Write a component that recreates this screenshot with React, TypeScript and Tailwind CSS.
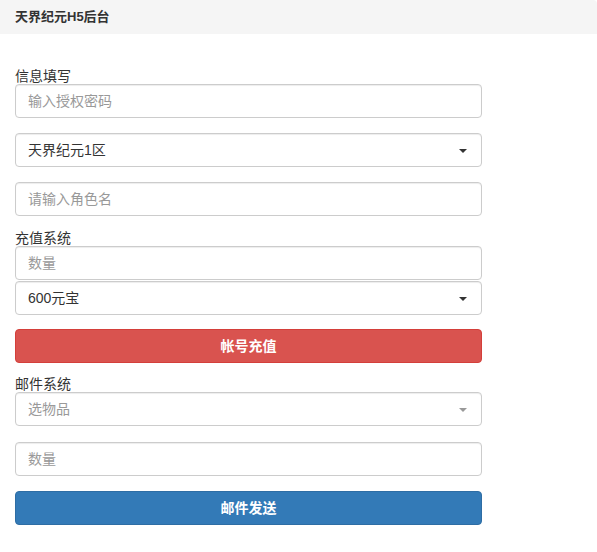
import React from "react";

const font = { fontFamily: '"Liberation Sans", "Noto Sans CJK SC", sans-serif' };

function Caret({ muted = false }: { muted?: boolean }) {
  return (
    <svg width="8" height="4" viewBox="0 0 8 4" className="absolute right-[14px] top-[15px]">
      <path d="M0 0h8L4 4z" fill={muted ? "#999" : "#333"} />
    </svg>
  );
}

function Field({ placeholder, className = "" }: { placeholder: string; className?: string }) {
  return (
    <div
      className={`flex h-[34px] items-center rounded-[4px] border border-[#ccc] bg-white px-3 text-[14px] text-[#999] shadow-[inset_0_1px_1px_rgba(0,0,0,0.075)] ${className}`}
    >
      {placeholder}
    </div>
  );
}

function Select({ value, muted = false, className = "" }: { value: string; muted?: boolean; className?: string }) {
  return (
    <div
      className={`relative flex h-[34px] items-center rounded-[4px] border border-[#ccc] bg-white px-3 text-[14px] shadow-[inset_0_1px_1px_rgba(0,0,0,0.075)] ${
        muted ? "text-[#999]" : "text-[#333]"
      } ${className}`}
    >
      {value}
      <Caret muted={muted} />
    </div>
  );
}

function Label({ children, className = "" }: { children: React.ReactNode; className?: string }) {
  return <div className={`h-4 text-[14px] leading-4 text-[#333] ${className}`}>{children}</div>;
}

export default function App() {
  return (
    <div className="min-h-[552px] w-[597px] bg-white" style={font}>
      <div className="flex h-[34px] items-center rounded-tr-[4px] bg-[#f5f5f5] px-[15px] text-[13px] font-bold text-[#333]">
        天界纪元H5后台
      </div>
      <div className="flex w-[482px] flex-col pl-[15px] pt-[34px]">
        <Label>信息填写</Label>
        <Field placeholder="输入授权密码" />
        <Select value="天界纪元1区" className="mt-[15px]" />
        <Field placeholder="请输入角色名" className="mt-[15px]" />

        <Label className="mt-[14px]">充值系统</Label>
        <Field placeholder="数量" />
        <Select value="600元宝" className="mt-px" />
        <button className="mt-[14px] flex h-[34px] items-center justify-center rounded-[4px] border border-[#d43f3a] bg-[#d9534f] text-[14px] font-bold text-white">
          帐号充值
        </button>

        <Label className="mt-[13px]">邮件系统</Label>
        <Select value="选物品" muted />
        <Field placeholder="数量" className="mt-4" />
        <button className="mt-[15px] flex h-[34px] items-center justify-center rounded-[4px] border border-[#2e6da4] bg-[#337ab7] text-[14px] font-bold text-white">
          邮件发送
        </button>
      </div>
    </div>
  );
}
